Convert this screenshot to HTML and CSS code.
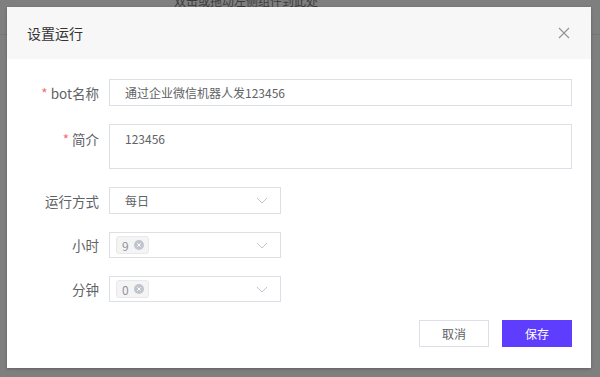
FILE: index.html
```html
<!DOCTYPE html>
<html lang="zh">
<head>
<meta charset="utf-8">
<link rel="stylesheet" href="styles.css">
</head>
<body>
<div class="backdrop">
  <div class="bg-hint">双击或拖动左侧组件到此处</div>
  <div class="bg-line"></div>
</div>
<div class="dialog">
  <div class="dialog-header">
    <span class="dialog-title">设置运行</span>
    <svg class="close" width="12" height="12" viewBox="0 0 12 12"><path d="M1 1L11 11M11 1L1 11" stroke="#909399" stroke-width="1.1" fill="none"/></svg>
  </div>
  <div class="dialog-body">
    <div class="row">
      <label class="label"><span class="req">*</span> bot名称</label>
      <div class="input">通过企业微信机器人发123456</div>
    </div>
    <div class="row row-top">
      <label class="label label-top"><span class="req">*</span> 简介</label>
      <div class="textarea">123456</div>
    </div>
    <div class="row">
      <label class="label">运行方式</label>
      <div class="select">
        <span class="val">每日</span>
        <svg class="chev" width="12" height="7" viewBox="0 0 12 7"><path d="M1 1L6 6L11 1" stroke="#c0c4cc" stroke-width="1" fill="none"/></svg>
      </div>
    </div>
    <div class="row">
      <label class="label">小时</label>
      <div class="select tags">
        <span class="tag">9<span class="tag-x"><svg width="10" height="10" viewBox="0 0 10 10"><circle cx="5" cy="5" r="5" fill="#c0c4cc"/><path d="M3.3 3.3L6.7 6.7M6.7 3.3L3.3 6.7" stroke="#fff" stroke-width="1"/></svg></span></span>
        <svg class="chev" width="12" height="7" viewBox="0 0 12 7"><path d="M1 1L6 6L11 1" stroke="#c0c4cc" stroke-width="1" fill="none"/></svg>
      </div>
    </div>
    <div class="row">
      <label class="label">分钟</label>
      <div class="select tags">
        <span class="tag">0<span class="tag-x"><svg width="10" height="10" viewBox="0 0 10 10"><circle cx="5" cy="5" r="5" fill="#c0c4cc"/><path d="M3.3 3.3L6.7 6.7M6.7 3.3L3.3 6.7" stroke="#fff" stroke-width="1"/></svg></span></span>
        <svg class="chev" width="12" height="7" viewBox="0 0 12 7"><path d="M1 1L6 6L11 1" stroke="#c0c4cc" stroke-width="1" fill="none"/></svg>
      </div>
    </div>
    <div class="footer">
      <button class="btn btn-cancel">取消</button>
      <button class="btn btn-primary">保存</button>
    </div>
  </div>
</div>
</body>
</html>
```

FILE: styles.css
```css
* { box-sizing: border-box; }
html, body {
  margin: 0;
  padding: 0;
  width: 600px;
  height: 377px;
  overflow: hidden;
  background: #7f7f7f;
  font-family: "Noto Sans CJK SC", "Noto Sans", "Liberation Sans", sans-serif;
  color: #606266;
}
.backdrop {
  position: absolute;
  left: 0;
  top: 0;
  width: 600px;
  height: 377px;
}
.bg-hint {
  position: absolute;
  left: 174px;
  top: -9px;
  font-size: 12px;
  line-height: 20px;
  color: #3c3c3c;
}
.bg-line {
  position: absolute;
  left: 0;
  top: 34px;
  width: 600px;
  height: 1px;
  background: #767676;
}
.dialog {
  position: absolute;
  left: 7px;
  top: 7px;
  width: 584px;
  height: 361px;
  background: #fff;
  box-shadow: 0 1px 3px rgba(0,0,0,0.25);
}
.dialog-header {
  height: 52px;
  background: #f7f7f7;
  display: flex;
  align-items: center;
  justify-content: space-between;
  padding: 0 21px 0 20px;
}
.dialog-title {
  font-size: 14px;
  color: #333;
}
.close { display: block; }
.dialog-body {
  padding: 20px 19px 20px 20px;
  display: flex;
  flex-direction: column;
  gap: 18px;
}
.row {
  display: flex;
  align-items: center;
}
.row-top { align-items: flex-start; }
.label {
  width: 82px;
  padding-right: 10px;
  flex: none;
  box-sizing: content-box;
  text-align: right;
  font-size: 13.5px;
  color: #606266;
  width: 72px;
}
.label-top { padding-top: 5px; }
.req { color: #f56c6c; }
.input, .textarea, .select {
  border: 1px solid #dcdfe6;
  background: #fff;
  font-size: 12px;
  color: #606266;
}
.input {
  flex: 1;
  height: 27px;
  line-height: 25px;
  padding: 0 15px;
}
.textarea {
  flex: 1;
  height: 45px;
  padding: 5px 15px;
  line-height: 18px;
}
.select {
  width: 172px;
  height: 27px;
  display: flex;
  align-items: center;
  justify-content: space-between;
  padding: 0 12px 0 15px;
}
.select.tags { padding-left: 6px; height: 26px; }
.chev { display: block; }
.tag {
  display: inline-flex;
  align-items: center;
  gap: 5px;
  height: 18px;
  padding: 0 4px 0 5px;
  background: #f4f4f5;
  border: 1px solid #e9e9eb;
  border-radius: 3px;
  font-size: 12px;
  color: #909399;
}
.tag-x svg { display: block; }
.footer {
  display: flex;
  justify-content: flex-end;
  gap: 13px;
  padding-top: 0;
}
.btn {
  width: 70px;
  height: 27px;
  font-family: inherit;
  font-size: 12px;
  border-radius: 0;
  cursor: pointer;
}
.btn-cancel {
  background: #fff;
  border: 1px solid #dcdfe6;
  color: #606266;
}
.btn-primary {
  background: #5f3dff;
  border: 1px solid #5f3dff;
  color: #fff;
}
```
